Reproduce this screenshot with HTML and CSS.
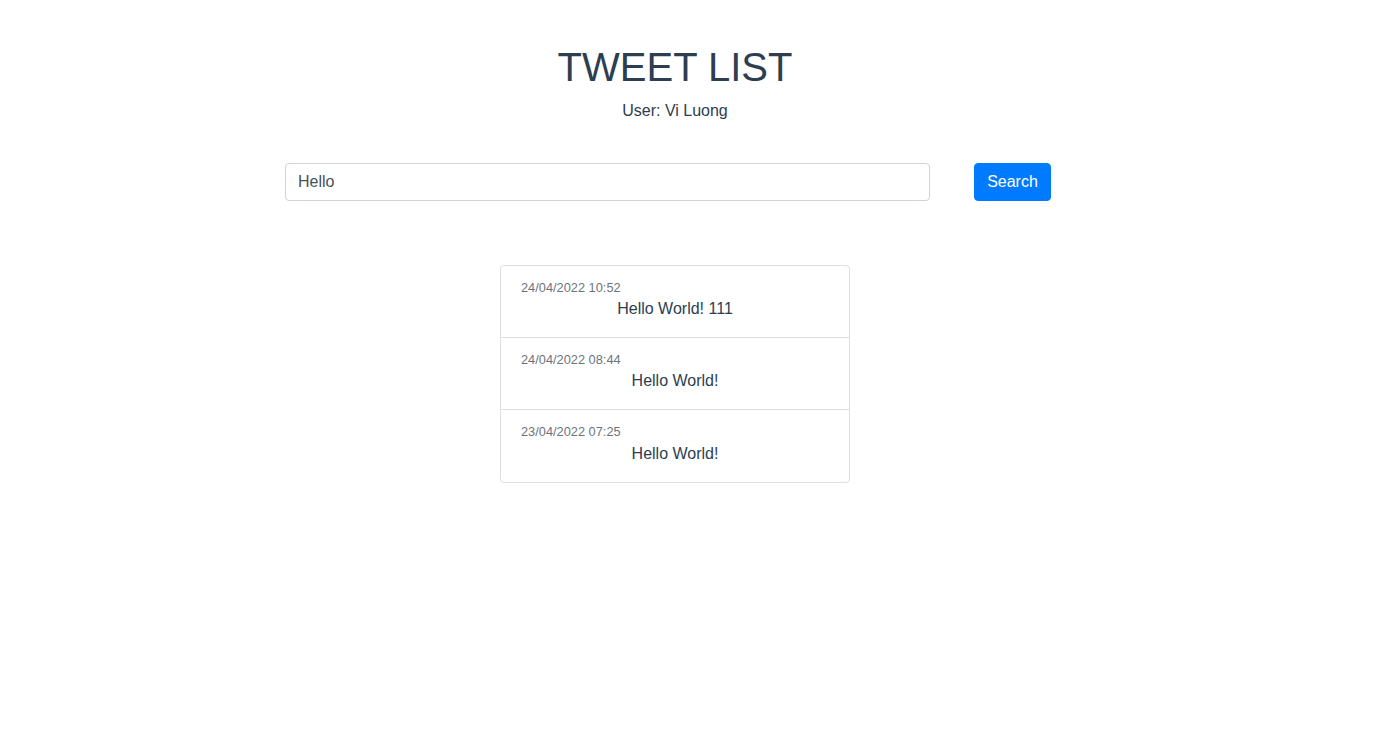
FILE: index.html
```html
<!DOCTYPE html>
<html lang="en">
<head>
<meta charset="utf-8">
<title>Tweet List</title>
<link rel="stylesheet" href="styles.css">
</head>
<body>
<main class="app">
  <header class="head">
    <h1 class="title">TWEET LIST</h1>
    <p class="user">User: Vi Luong</p>
  </header>
  <form class="search">
    <input class="search-input" type="text" value="Hello">
    <button class="search-btn" type="button">Search</button>
  </form>
  <ul class="tweets">
    <li class="tweet">
      <div class="tweet-date">24/04/2022 10:52</div>
      <div class="tweet-text">Hello World! 111</div>
    </li>
    <li class="tweet">
      <div class="tweet-date">24/04/2022 08:44</div>
      <div class="tweet-text">Hello World!</div>
    </li>
    <li class="tweet">
      <div class="tweet-date">23/04/2022 07:25</div>
      <div class="tweet-text">Hello World!</div>
    </li>
  </ul>
</main>
</body>
</html>
```
FILE: styles.css
```css
* { box-sizing: border-box; }
html, body { margin: 0; padding: 0; background: #fff; }
body {
  font-family: "Liberation Sans", Arial, sans-serif;
  font-size: 16px;
  line-height: 1.5;
  color: #2c3e50;
}
.app {
  width: 1350px;
  padding-top: 43px;
}
.head { text-align: center; }
.title {
  margin: 0 0 8px;
  font-size: 40px;
  font-weight: 400;
  line-height: 1.2;
}
.user { margin: 0; }
.search {
  display: flex;
  gap: 44px;
  width: 766px;
  margin: 40px 0 0 285px;
}
.search-input {
  flex: 1;
  height: 38px;
  padding: 6px 12px;
  font: inherit;
  color: #495057;
  border: 1px solid #ced4da;
  border-radius: 4px;
  outline: none;
}
.search-btn {
  width: 77px;
  height: 38px;
  font: inherit;
  color: #fff;
  background: #007bff;
  border: 1px solid #007bff;
  border-radius: 4px;
  padding: 6px 12px;
}
.tweets {
  list-style: none;
  width: 350px;
  margin: 64px auto 0;
  padding: 0;
  border: 1px solid #dfdfdf;
  border-radius: 4px;
}
.tweet {
  padding: 12px 20px 16px;
  border-top: 1px solid #dfdfdf;
}
.tweet:first-child { border-top: 0; }
.tweet-date {
  font-size: 12.8px;
  line-height: 19.2px;
  color: #6c757d;
}
.tweet-text {
  text-align: center;
  line-height: 24px;
}
```
